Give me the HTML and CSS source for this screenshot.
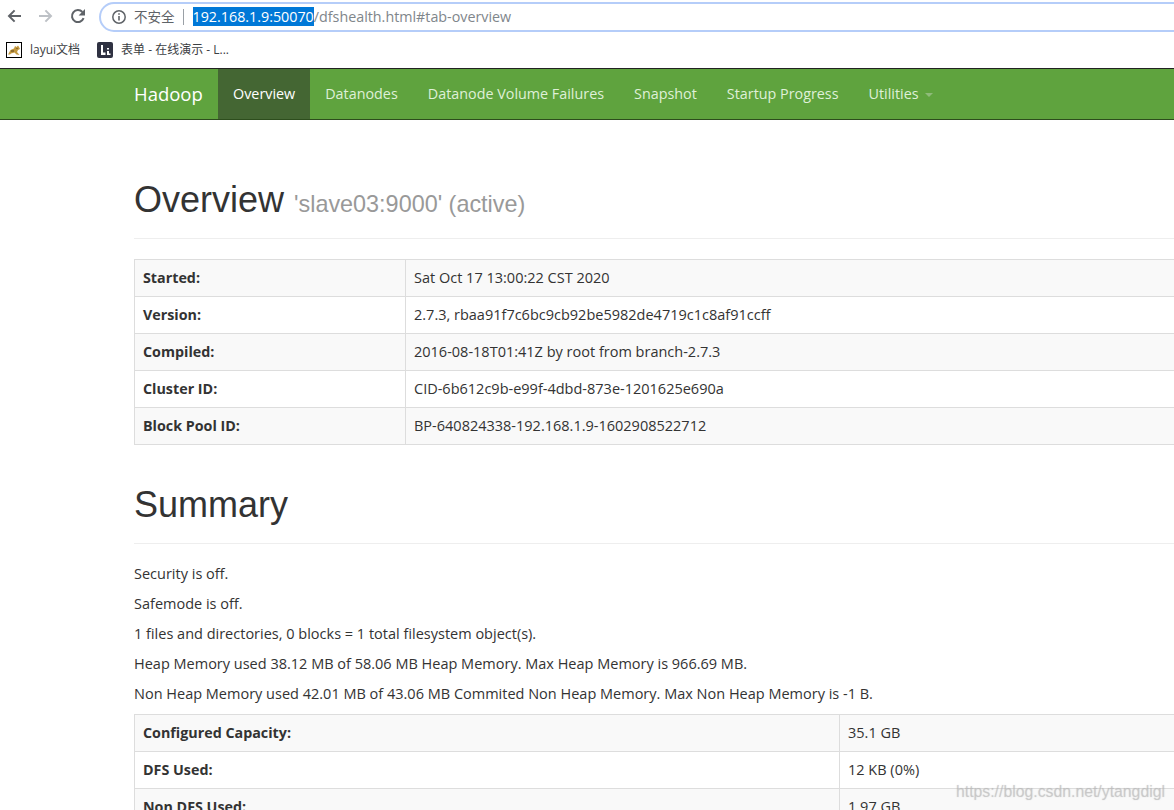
FILE: index.html
```html
<!DOCTYPE html>
<html lang="zh">
<head>
<meta charset="utf-8">
<title>Namenode information</title>
<link rel="stylesheet" href="styles.css">
</head>
<body>
<div class="chrome">
  <div class="toolbar">
    <svg class="tool-icon" viewBox="0 0 16 16"><path d="M15 8H3.2M8.6 2.4 3 8l5.6 5.6" fill="none" stroke="#5f6368" stroke-width="2"/></svg>
    <svg class="tool-icon" viewBox="0 0 16 16"><path d="M1 8h11.8M7.4 2.4 13 8l-5.6 5.6" fill="none" stroke="#bdc1c6" stroke-width="2"/></svg>
    <svg class="tool-icon" viewBox="0 0 16 16"><path d="M13.6 10.2A6 6 0 1 1 12.4 4" fill="none" stroke="#5f6368" stroke-width="2"/><path d="M15 1v6.4H8.6z" fill="#5f6368"/></svg>
    <div class="omnibox">
      <svg class="info" viewBox="0 0 16 16"><circle cx="8" cy="8" r="6.2" fill="none" stroke="#5f6368" stroke-width="1.5"/><path d="M8 7v4.5M8 4.2v1.6" stroke="#5f6368" stroke-width="1.6"/></svg>
      <span class="insecure">不安全</span>
      <span class="divider"></span>
      <span class="url"><span class="selected">192.168.1.9:50070</span>/dfshealth.html#tab-overview</span>
    </div>
  </div>
  <div class="bookmarks">
    <span class="bookmark">
      <svg class="favicon" viewBox="0 0 16 16"><rect x=".5" y=".5" width="15" height="15" fill="#fff" stroke="#000"/><path d="M2 12.5 4.5 8 8 6.5l1-2.5 1.500 1L12 3.500l1 1.500 1 2-2 1-1 2 2.500 3-3-.5-2-2-3.500 1-1 1z" fill="#c4993f"/><path d="M10.500 6h1v1h-1zM5 8.500h3v1H5z" fill="#5a4320"/></svg>
      layui文档
    </span>
    <span class="bookmark">
      <svg class="favicon" viewBox="0 0 16 16"><rect width="16" height="16" rx="2" fill="#2f3242"/><path d="M4 3h2v7.500h2.500V13H4zM10 6h2v1.500h-2zM10 9h2v2.500h1.500V13H10z" fill="#fff"/></svg>
      表单 - 在线演示 - L...
    </span>
  </div>
</div>
<nav class="navbar">
  <a class="brand">Hadoop</a>
  <a class="nav-item active">Overview</a>
  <a class="nav-item">Datanodes</a>
  <a class="nav-item">Datanode Volume Failures</a>
  <a class="nav-item">Snapshot</a>
  <a class="nav-item">Startup Progress</a>
  <a class="nav-item">Utilities <span class="caret"></span></a>
</nav>
<main class="content">
  <div class="page-header overview-header">
    <h1>Overview <small>'slave03:9000' (active)</small></h1>
  </div>
  <table class="info-table overview-table">
    <tr><th>Started:</th><td>Sat Oct 17 13:00:22 CST 2020</td></tr>
    <tr><th>Version:</th><td>2.7.3, rbaa91f7c6bc9cb92be5982de4719c1c8af91ccff</td></tr>
    <tr><th>Compiled:</th><td>2016-08-18T01:41Z by root from branch-2.7.3</td></tr>
    <tr><th>Cluster ID:</th><td>CID-6b612c9b-e99f-4dbd-873e-1201625e690a</td></tr>
    <tr><th>Block Pool ID:</th><td>BP-640824338-192.168.1.9-1602908522712</td></tr>
  </table>
  <div class="page-header summary-header">
    <h1>Summary</h1>
  </div>
  <p>Security is off.</p>
  <p>Safemode is off.</p>
  <p>1 files and directories, 0 blocks = 1 total filesystem object(s).</p>
  <p>Heap Memory used 38.12 MB of 58.06 MB Heap Memory. Max Heap Memory is 966.69 MB.</p>
  <p>Non Heap Memory used 42.01 MB of 43.06 MB Commited Non Heap Memory. Max Non Heap Memory is -1 B.</p>
  <table class="info-table summary-table">
    <tr><th>Configured Capacity:</th><td>35.1 GB</td></tr>
    <tr><th>DFS Used:</th><td>12 KB (0%)</td></tr>
    <tr><th>Non DFS Used:</th><td>1.97 GB</td></tr>
  </table>
</main>
<div class="watermark">https://blog.csdn.net/ytangdigl</div>
</body>
</html>
```
FILE: styles.css
```css
* { box-sizing: border-box; }
html, body { margin: 0; height: 810px; overflow: hidden; }
body {
  position: relative;
  width: 1174px;
  background: #fff;
  color: #333;
  font: 14.5px/20px "Open Sans", "Noto Sans CJK SC", sans-serif;
}
.chrome { height: 68px; background: #fff; }
.toolbar { display: flex; align-items: center; height: 34px; padding: 0 4px 0 6px; }
.tool-icon { width: 16px; height: 16px; margin: 0 16px 2px 0; flex: none; }
.tool-icon:nth-child(3) { margin-right: 13px; }
.omnibox {
  display: flex;
  align-items: center;
  flex: 1;
  height: 30px;
  margin-right: -40px;
  padding: 0 0 1px 10px;
  border: 2px solid #b5cdf9;
  border-radius: 15px;
  font-size: 14.3px;
}
.info { width: 16px; height: 16px; flex: none; }
.insecure { margin-left: 7px; color: #5f6368; font-size: 13.5px; }
.divider { width: 1px; height: 16px; margin: 0 9px 0 8px; background: #9aa0a6; }
.url { color: #80868b; white-space: nowrap; }
.selected { background: #0078d7; color: #fff; }
.bookmarks { display: flex; align-items: center; gap: 16px; height: 30px; padding: 1px 6px 0; font-size: 12px; color: #3c4043; }
.bookmark { display: flex; align-items: center; gap: 8px; }
.bookmark:first-child { margin-right: 1px; }
.favicon { width: 16px; height: 16px; flex: none; }
.navbar {
  display: flex;
  align-items: stretch;
  height: 52px;
  padding-left: 134px;
  border-top: 1px solid #222;
  border-bottom: 1px solid #2d4d1d;
  background: #5fa33e;
}
.brand { display: flex; align-items: center; width: 84px; color: #fff; font-size: 18.5px; }
.nav-item { display: flex; align-items: center; padding: 0 15px; color: #dff0d8; font-size: 14.35px; white-space: nowrap; }
.nav-item.active { color: #fff; background: #446633; }
.caret {
  display: inline-block;
  margin-left: 6px;
  margin-top: 2px;
  border-top: 4px solid #8fbb7a;
  border-left: 4px solid transparent;
  border-right: 4px solid transparent;
}
.content { width: 1300px; margin-left: 134px; }
.page-header { border-bottom: 1px solid #eee; }
.page-header h1 { margin: 20px 0 10px; font-family: "Liberation Sans", Arial, sans-serif; font-size: 36px; line-height: 40px; font-weight: 500; }
.page-header small { font-size: 23.4px; font-weight: 400; color: #999; }
.overview-header { margin-top: 60px; padding-bottom: 4px; }
.summary-header { margin-top: 40px; margin-bottom: 20px; padding-bottom: 8px; }
.overview-table { margin-top: 20px; }
.info-table { width: 1300px; table-layout: fixed; border-collapse: collapse; margin-bottom: 20px; }
.info-table th, .info-table td { padding: 8px; border: 1px solid #ddd; text-align: left; line-height: 20px; }
.info-table th { font-size: 14.3px; font-weight: 700; }
.info-table tr:nth-child(odd) { background: #f9f9f9; }
.overview-table th { width: 271px; }
.summary-table th { width: 705px; }
p { margin: 0 0 10px; white-space: nowrap; }
.watermark {
  position: absolute;
  right: 9px;
  top: 782px;
  color: rgba(180,180,180,.4);
  font-family: "Liberation Sans", Arial, sans-serif;
  font-size: 15.8px;
  line-height: 20px;
  text-shadow: 0 0 1px rgba(170,170,170,.5);
  white-space: nowrap;
}
```
